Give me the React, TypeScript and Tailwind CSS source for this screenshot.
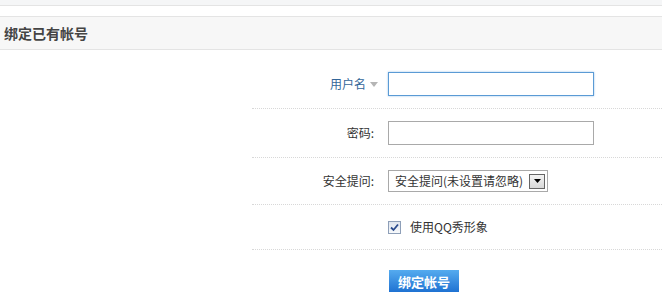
import React from 'react';

const font = { fontFamily: '"Noto Sans CJK SC", "Noto Sans", sans-serif' };

function Checkbox() {
  return (
    <span className="w-[13px] h-[13px] border border-[#8e9fb8] bg-gradient-to-b from-[#dfe5ee] to-[#f7f9fb] flex items-center justify-center shrink-0">
      <svg width="9" height="9" viewBox="0 0 9 9">
        <path d="M1 4.5 L3.5 7 L8 1.5" fill="none" stroke="#2a4a8c" strokeWidth="1.8" />
      </svg>
    </span>
  );
}

export default function App() {
  return (
    <div className="w-[662px] h-[297px] bg-white overflow-hidden text-[12px] text-[#333]" style={font}>
      {/* top strip */}
      <div className="h-[6px] bg-[#f5f6f7] border-b border-[#e4e4e4]" />
      <div className="h-[10px]" />

      {/* header */}
      <div className="h-[34px] bg-[#f7f7f7] border-y border-[#e4e4e4] flex items-center px-[4px]">
        <h2 className="text-[14px] font-semibold text-[#444] leading-none">绑定已有帐号</h2>
      </div>

      {/* form */}
      <div className="ml-[252px]">
        <div className="flex items-start pt-[22px] pb-[12px] border-b border-dotted border-[#d8d8d8]">
          <div className="w-[136px] pr-[10px] flex items-center justify-end h-[24px]">
            <span className="text-[#336699]">用户名</span>
            <svg width="8" height="5" viewBox="0 0 8 5" className="ml-[4px]">
              <path d="M0 0 L8 0 L4 5 Z" fill="#b5b5b5" />
            </svg>
          </div>
          <input
            type="text"
            className="w-[206px] h-[24px] border border-[#5b9bd5] shadow-[0_0_2px_#9cc4ea] outline-none px-1"
          />
        </div>

        <div className="flex items-start py-[12px] border-b border-dotted border-[#d8d8d8]">
          <div className="w-[136px] pr-[14px] flex items-center justify-end h-[24px]">
            <span>密码:</span>
          </div>
          <input type="password" className="w-[206px] h-[24px] border border-[#a9a9a9] outline-none px-1" />
        </div>

        <div className="flex items-start py-[12px] border-b border-dotted border-[#d8d8d8]">
          <div className="w-[136px] pr-[14px] flex items-center justify-end h-[22px]">
            <span>安全提问:</span>
          </div>
          <div className="w-[160px] h-[22px] border border-[#a9a9a9] flex items-center justify-between pl-[6px] pr-[2px]">
            <span>安全提问(未设置请忽略)</span>
            <span className="w-[16px] h-[15px] border border-[#666] bg-gradient-to-b from-[#f4f4f4] to-[#d8d8d8] flex items-center justify-center">
              <svg width="7" height="4" viewBox="0 0 7 4">
                <path d="M0 0 L7 0 L3.5 4 Z" fill="#000" />
              </svg>
            </span>
          </div>
        </div>

        <div className="flex items-center h-[45px] border-b border-dotted border-[#d8d8d8]">
          <div className="w-[136px]" />
          <Checkbox />
          <span className="ml-[9px]">使用QQ秀形象</span>
        </div>

        <div className="flex pt-[20px]">
          <div className="w-[137px]" />
          <button className="w-[70px] h-[22px] bg-gradient-to-b from-[#55abef] to-[#1e72d2] text-white font-bold text-[13px] leading-none flex items-center justify-center">
            绑定帐号
          </button>
        </div>
      </div>
    </div>
  );
}
